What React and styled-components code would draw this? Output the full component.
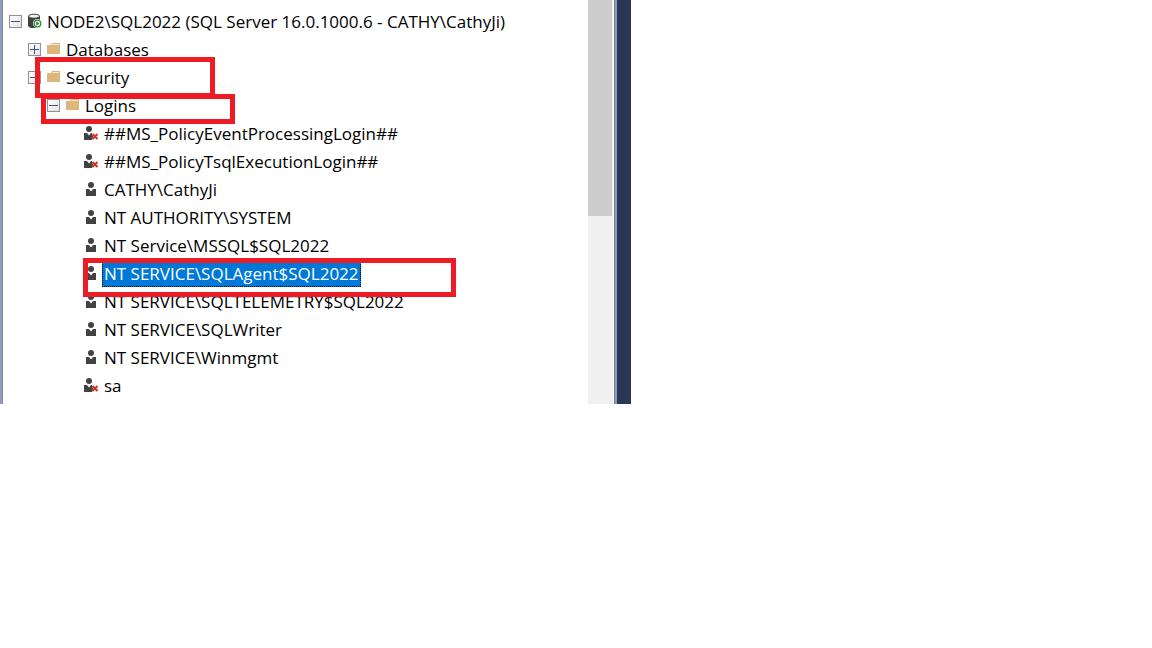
import React, { useState } from 'react';
import styled, { createGlobalStyle, css } from 'styled-components';

const GlobalStyle = createGlobalStyle`
  * {
    box-sizing: border-box;
  }

  body {
    margin: 0;
    background: #fff;
    color: #000;
    font-family: 'Segoe UI', 'Open Sans', 'Noto Sans', sans-serif;
    font-size: 17px;
  }
`;

const Explorer = styled.div`
  display: flex;
  width: 100%;
  max-width: 631px;
  background: #fff;
  border-left: 2px solid #8e9bbc;
`;

const TreePanel = styled.div`
  flex: 1;
  min-width: 0;
  overflow: hidden;
  padding: 7px 0 5px 6px;
  border-left: 1px solid #868ca3;
`;

const Tree = styled.ul`
  list-style: none;
  margin: 0;
  padding: 0;
`;

const Row = styled.li`
  position: relative;
  display: flex;
  align-items: center;
  height: 28px;
  padding-left: ${({ $level }) => $level * 19}px;
`;

const Expander = styled.button`
  display: flex;
  align-items: center;
  justify-content: center;
  flex: none;
  width: 13px;
  height: 13px;
  margin-right: 5px;
  padding: 0;
  border: 1px solid #919191;
  background: linear-gradient(135deg, #fff, #e4e4e4);
`;

const ExpanderSpace = styled.span`
  flex: none;
  width: 18px;
`;

const Icon = styled.svg`
  flex: none;
  width: 16px;
  height: 16px;
  margin-right: 2px;
`;

const Label = styled.button`
  height: 28px;
  padding: 2px 2px 0;
  border: 0;
  background: none;
  color: inherit;
  font: inherit;
  line-height: 26px;
  white-space: nowrap;

  ${({ $selected }) =>
    $selected &&
    css`
      background: #0078d7;
      color: #fff;
      outline: 1px dotted #000;
      outline-offset: -1px;
    `}
`;

const Highlight = styled.span`
  position: absolute;
  z-index: 1;
  top: ${({ $top }) => $top}px;
  left: ${({ $left }) => $left}px;
  width: ${({ $width }) => $width}px;
  height: ${({ $height }) => $height}px;
  border: 5px solid #ed1c24;
  pointer-events: none;
`;

const ScrollTrack = styled.div`
  flex: none;
  width: 25px;
  background: #f0f0f0;
`;

const ScrollThumb = styled.div`
  width: 24px;
  height: 216px;
  background: #cdcdcd;
`;

const Splitter = styled.div`
  flex: none;
  width: 17px;
  margin-left: 1px;
  background: #293955;
  border-left: 1px solid #7b7f8c;
  box-shadow: inset 2px 0 #8e9bbc;
`;

const ServerIcon = () => (
  <Icon viewBox="0 0 16 16" aria-hidden="true">
    <path d="M1 3.200v9.200C1 14 3.400 15 7 15s6-1 6-2.600V3.200z" fill="#424242" />
    <ellipse cx="7" cy="3.200" rx="5.500" ry="2" fill="#f0eff1" stroke="#424242" />
    <circle cx="10.500" cy="10.500" r="4.500" fill="#fff" />
    <circle cx="10.500" cy="10.500" r="3.300" fill="#fff" stroke="#388a34" strokeWidth="1.300" />
    <path d="M9.200 8.300v4.400l3.500-2.200z" fill="#388a34" />
  </Icon>
);

const FolderIcon = () => (
  <Icon viewBox="0 0 16 16" aria-hidden="true">
    <path d="M1 4h4l1-2h8v11H1z" fill="#dcb67a" />
    <path d="M6.500 3H13v1H6z" fill="#f5ead8" />
  </Icon>
);

const UserIcon = () => (
  <Icon viewBox="0 0 16 16" aria-hidden="true">
    <circle cx="7" cy="4" r="3" fill="#424242" />
    <path d="M2 8h3l2 2.500L9 8h3v7H2z" fill="#424242" />
  </Icon>
);

const DisabledUserIcon = () => (
  <Icon viewBox="0 0 16 16" aria-hidden="true">
    <circle cx="5" cy="4" r="3" fill="#424242" />
    <path d="M0 8h3l2 2.500L7 8h1v1.500l1 2-1 3.500H0z" fill="#424242" />
    <path d="M8.500 9l5 5m0-5l-5 5" stroke="#d82c20" strokeWidth="1.900" />
  </Icon>
);

const icons = {
  server: ServerIcon,
  folder: FolderIcon,
  user: UserIcon,
  disabled: DisabledUserIcon,
};

const nodes = [
  { label: 'NODE2\\SQL2022 (SQL Server 16.0.1000.6 - CATHY\\CathyJi)', level: 0, icon: 'server', expanded: true },
  { label: 'Databases', level: 1, icon: 'folder', expanded: false },
  { label: 'Security', level: 1, icon: 'folder', expanded: true, mark: { $top: -6, $left: 26, $width: 180, $height: 41 } },
  { label: 'Logins', level: 2, icon: 'folder', expanded: true, mark: { $top: 3, $left: 32, $width: 194, $height: 30 } },
  { label: '##MS_PolicyEventProcessingLogin##', level: 3, icon: 'disabled' },
  { label: '##MS_PolicyTsqlExecutionLogin##', level: 3, icon: 'disabled' },
  { label: 'CATHY\\CathyJi', level: 3, icon: 'user' },
  { label: 'NT AUTHORITY\\SYSTEM', level: 3, icon: 'user' },
  { label: 'NT Service\\MSSQL$SQL2022', level: 3, icon: 'user' },
  { label: 'NT SERVICE\\SQLAgent$SQL2022', level: 3, icon: 'user', mark: { $top: -1, $left: 74, $width: 373, $height: 39 } },
  { label: 'NT SERVICE\\SQLTELEMETRY$SQL2022', level: 3, icon: 'user' },
  { label: 'NT SERVICE\\SQLWriter', level: 3, icon: 'user' },
  { label: 'NT SERVICE\\Winmgmt', level: 3, icon: 'user' },
  { label: 'sa', level: 3, icon: 'disabled' },
];

const TreeNode = ({ node, selected, onSelect }) => {
  const NodeIcon = icons[node.icon];
  const hasChildren = node.expanded !== undefined;

  return (
    <Row $level={node.level}>
      {hasChildren ? (
        <Expander type="button" aria-expanded={node.expanded} aria-label={`Toggle ${node.label}`}>
          <svg width="9" height="9" viewBox="0 0 9 9" aria-hidden="true">
            <path d={node.expanded ? 'M0 4.500h9' : 'M0 4.500h9M4.500 0v9'} stroke="#3b5499" />
          </svg>
        </Expander>
      ) : (
        <ExpanderSpace />
      )}
      <NodeIcon />
      <Label type="button" $selected={selected} onClick={() => onSelect(node.label)}>
        {node.label}
      </Label>
      {node.mark && <Highlight {...node.mark} />}
    </Row>
  );
};

const App = () => {
  const [selected, setSelected] = useState('NT SERVICE\\SQLAgent$SQL2022');

  return (
    <>
      <GlobalStyle />
      <Explorer>
        <TreePanel>
          <Tree>
            {nodes.map((node) => (
              <TreeNode
                key={node.label}
                node={node}
                selected={node.label === selected}
                onSelect={setSelected}
              />
            ))}
          </Tree>
        </TreePanel>
        <ScrollTrack>
          <ScrollThumb />
        </ScrollTrack>
        <Splitter />
      </Explorer>
    </>
  );
};

export default App;
